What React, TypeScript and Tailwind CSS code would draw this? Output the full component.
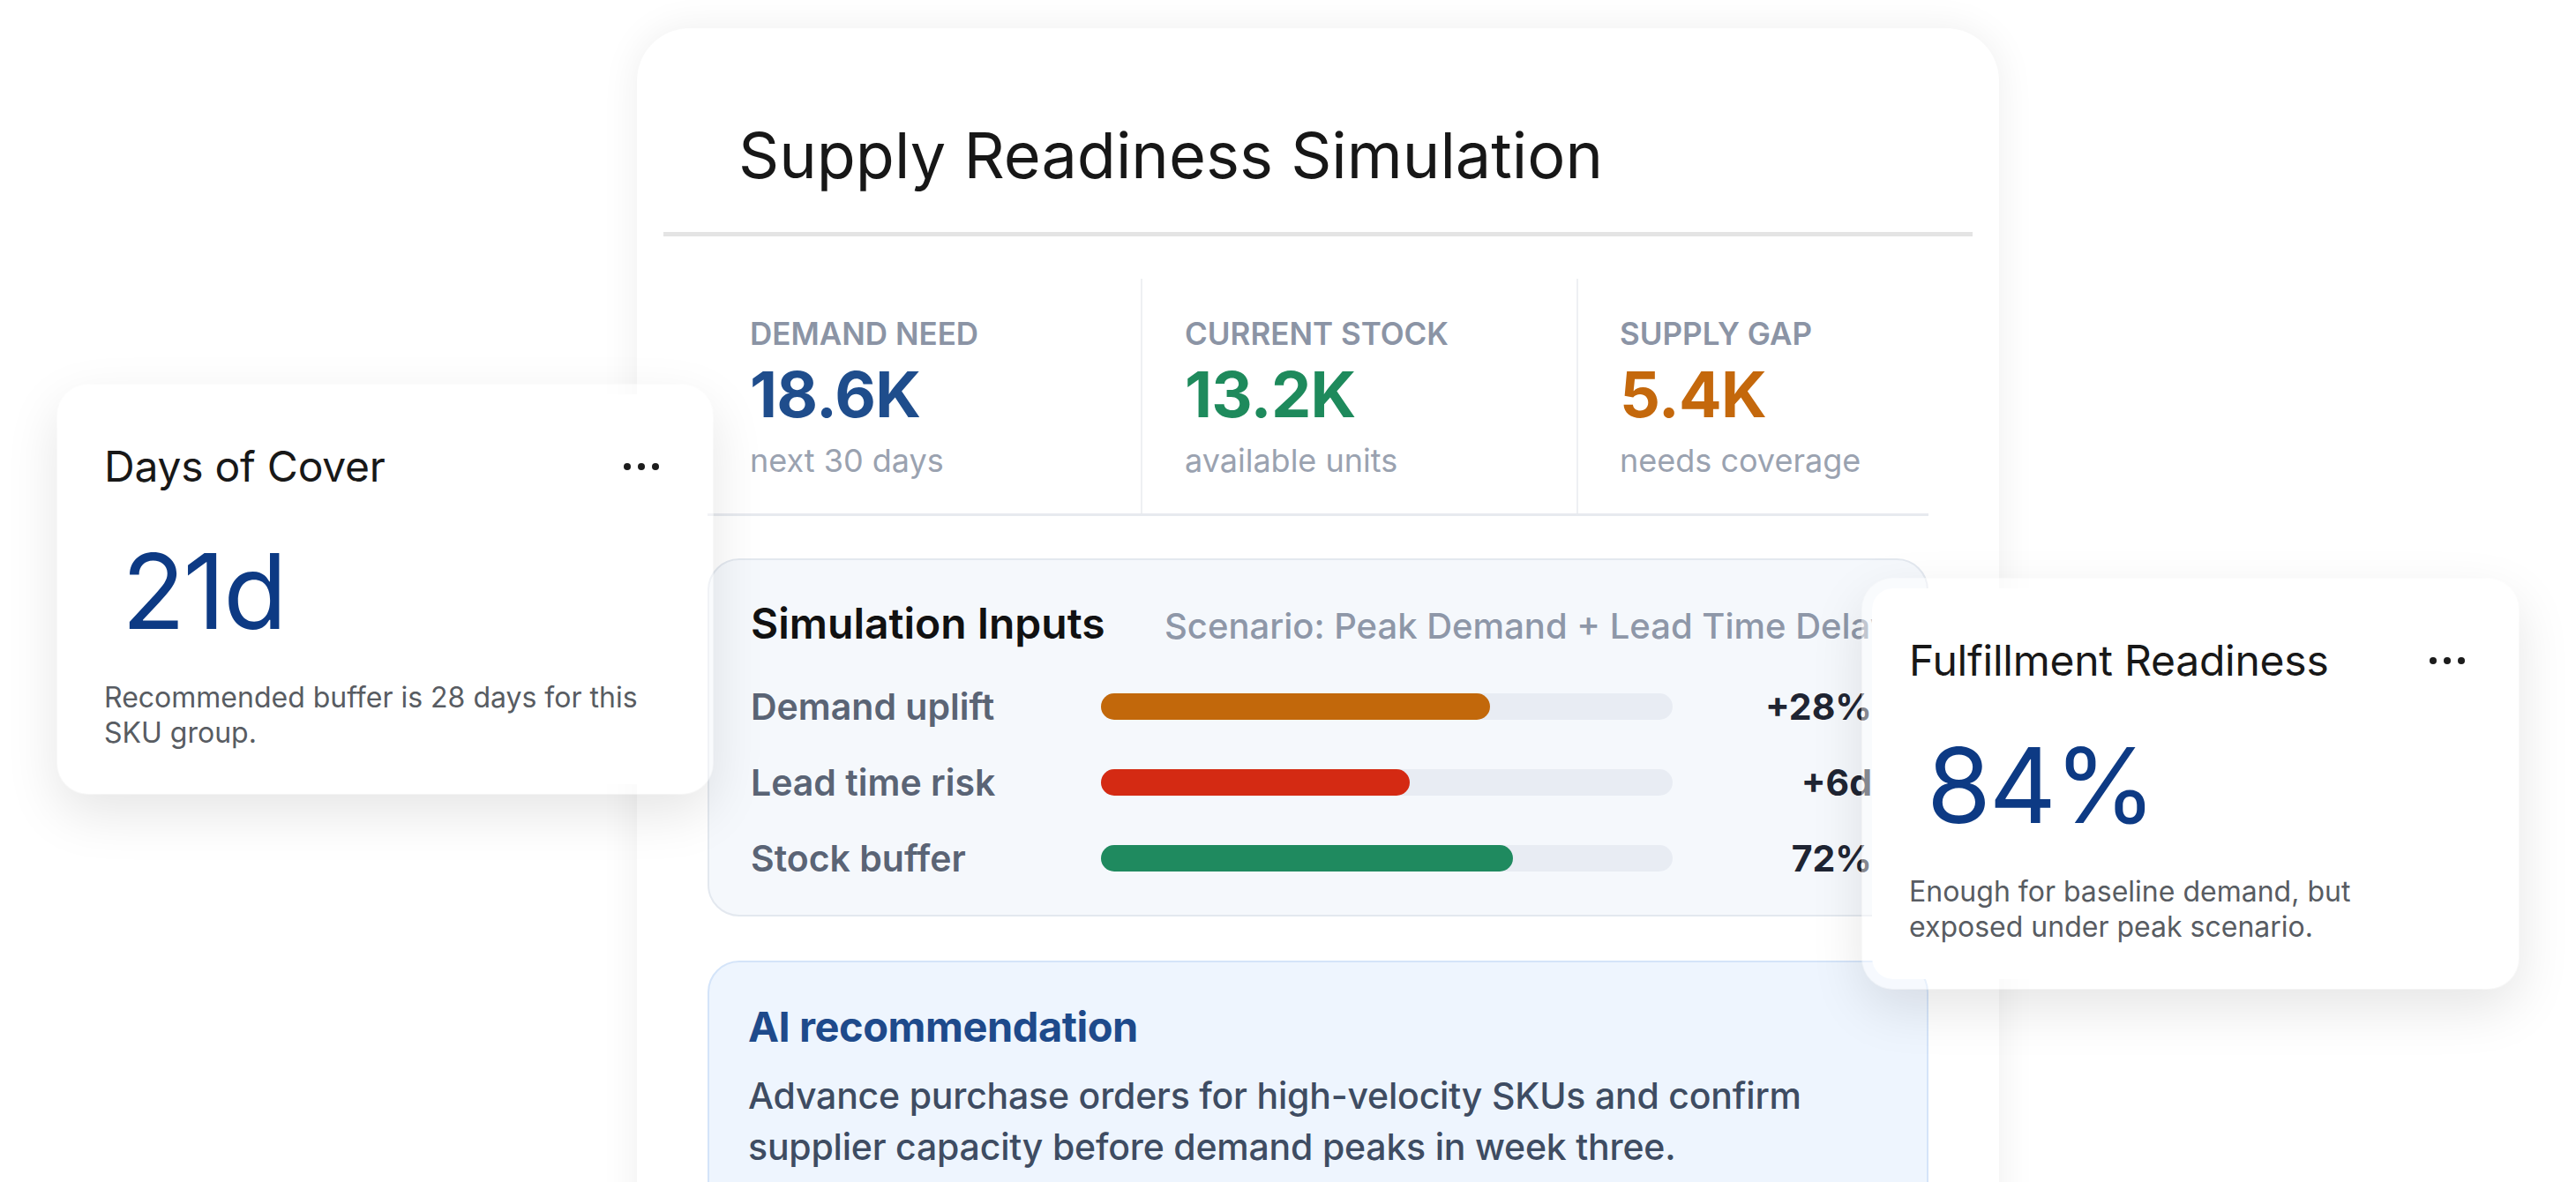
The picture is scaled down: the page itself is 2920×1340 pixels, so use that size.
import React from "react";

type Stat = { label: string; value: string; sub: string; color: string; width: string; pad: string; divider: boolean };

const stats: Stat[] = [
  { label: "DEMAND NEED", value: "18.6K", sub: "next 30 days", color: "text-[#1f4d8c]", width: "w-[491px]", pad: "pl-[48px]", divider: false },
  { label: "CURRENT STOCK", value: "13.2K", sub: "available units", color: "text-[#1e8a5c]", width: "w-[494px]", pad: "pl-[48px]", divider: true },
  { label: "SUPPLY GAP", value: "5.4K", sub: "needs coverage", color: "text-[#c4680c]", width: "flex-1", pad: "pl-[47px]", divider: true },
];

type Input = { label: string; value: string; pct: number; fill: string };

const inputs: Input[] = [
  { label: "Demand uplift", value: "+28%", pct: 68, fill: "bg-[#c2680b]" },
  { label: "Lead time risk", value: "+6d", pct: 54, fill: "bg-[#d42a13]" },
  { label: "Stock buffer", value: "72%", pct: 72, fill: "bg-[#1f8a5f]" },
];

function Dots() {
  return (
    <div className="flex items-center gap-[8px]">
      <span className="block h-[8px] w-[8px] rounded-full bg-[#1c1c1c]" />
      <span className="block h-[8px] w-[8px] rounded-full bg-[#1c1c1c]" />
      <span className="block h-[8px] w-[8px] rounded-full bg-[#1c1c1c]" />
    </div>
  );
}

function MetricCard({ title, value, note, className }: { title: string; value: string; note: string; className: string }) {
  return (
    <div
      className={`absolute rounded-[36px] border-[12px] border-white/45 bg-white bg-clip-padding shadow-[0_22px_60px_rgba(0,0,0,0.10)] ${className}`}
    >
      <div className="pl-[42px] pr-[50px] pt-[58px]">
        <div className="flex items-center justify-between">
          <h2 className="text-[48px] font-normal leading-none tracking-[-0.005em] text-[#181818]">{title}</h2>
          <Dots />
        </div>
        <div className="mt-[58px] pl-[20px] text-[118px] font-normal leading-none tracking-[-0.02em] text-[#0d3a84]">
          {value}
        </div>
        <p className="mt-[42px] text-[32px] leading-[40px] text-[#585c62]">{note}</p>
      </div>
    </div>
  );
}

export default function App() {
  return (
    <div className="relative h-[1340px] w-[2920px] overflow-hidden bg-white font-['Inter','Liberation_Sans',sans-serif]">
      <div className="ml-[722px] mt-[32px] h-[1420px] w-[1544px] rounded-[60px] bg-white shadow-[0_0_44px_rgba(0,0,0,0.07)]">
        <div className="px-[30px] pt-[108px]">
          <h1 className="pl-[85px] text-[72px] font-normal leading-none text-[#171717]">
            Supply Readiness Simulation
          </h1>
          <div className="mt-[51px] h-[5px] bg-[#e4e4e4]" />
        </div>

        <div className="px-[80px] pt-[48px]">
          <div className="flex border-b-[3px] border-[#e7eaef]">
            {stats.map((s) => (
              <div
                key={s.label}
                className={`${s.width} ${s.pad} pb-[42px] pt-[45px] ${s.divider ? "border-l-2 border-[#eef0f3]" : ""}`}
              >
                <div className="text-[35px] font-semibold leading-none text-[#8b94a5]">{s.label}</div>
                <div className={`mt-[15px] text-[72px] font-bold leading-none tracking-[-0.01em] ${s.color}`}>{s.value}</div>
                <div className="mt-[21px] text-[36px] leading-none text-[#9aa2b0]">{s.sub}</div>
              </div>
            ))}
          </div>

          <div className="mt-[48px] rounded-[36px] border-2 border-[#e3e8ef] bg-[#f5f8fc] pb-[21px] pl-[47px] pr-[62px] pt-[48px]">
            <div className="flex items-baseline whitespace-nowrap">
              <h3 className="w-[469px] shrink-0 text-[48px] font-semibold leading-none text-[#111111]">
                Simulation Inputs
              </h3>
              <span className="text-[40px] font-medium leading-none text-[#8e97a8]">
                Scenario: Peak Demand + Lead Time Delay
              </span>
            </div>
            <div className="mt-[27px]">
              {inputs.map((r) => (
                <div key={r.label} className="flex h-[86px] items-center">
                  <div className="w-[397px] shrink-0 text-[41px] font-semibold leading-none text-[#5a6475]">
                    {r.label}
                  </div>
                  <div className="h-[30px] w-[648px] shrink-0 rounded-full bg-[#e8ecf3]">
                    <div className={`h-full rounded-full ${r.fill}`} style={{ width: `${r.pct}%` }} />
                  </div>
                  <div className="flex-1 text-right text-[41px] font-bold leading-none text-[#1f2533]">
                    {r.value}
                  </div>
                </div>
              ))}
            </div>
          </div>

          <div className="mt-[50px] rounded-[36px] border-2 border-[#d4e4f9] bg-[#eef5fe] pb-[60px] pl-[44px] pr-[60px] pt-[49px]">
            <h3 className="text-[47px] font-bold leading-none tracking-[-0.01em] text-[#1e4a8b]">AI recommendation</h3>
            <p className="mt-[26px] text-[41px] font-medium leading-[58px] tracking-[-0.005em] text-[#3e4c62]">
              Advance purchase orders for high-velocity SKUs and confirm supplier capacity before demand peaks in week three.
            </p>
          </div>
        </div>
      </div>

      <MetricCard
        className="left-[64px] top-[435px] h-[466px] w-[745px]"
        title="Days of Cover"
        value="21d"
        note="Recommended buffer is 28 days for this SKU group."
      />
      <MetricCard
        className="left-[2110px] top-[655px] h-[467px] w-[746px]"
        title="Fulfillment Readiness"
        value="84%"
        note="Enough for baseline demand, but exposed under peak scenario."
      />
    </div>
  );
}
